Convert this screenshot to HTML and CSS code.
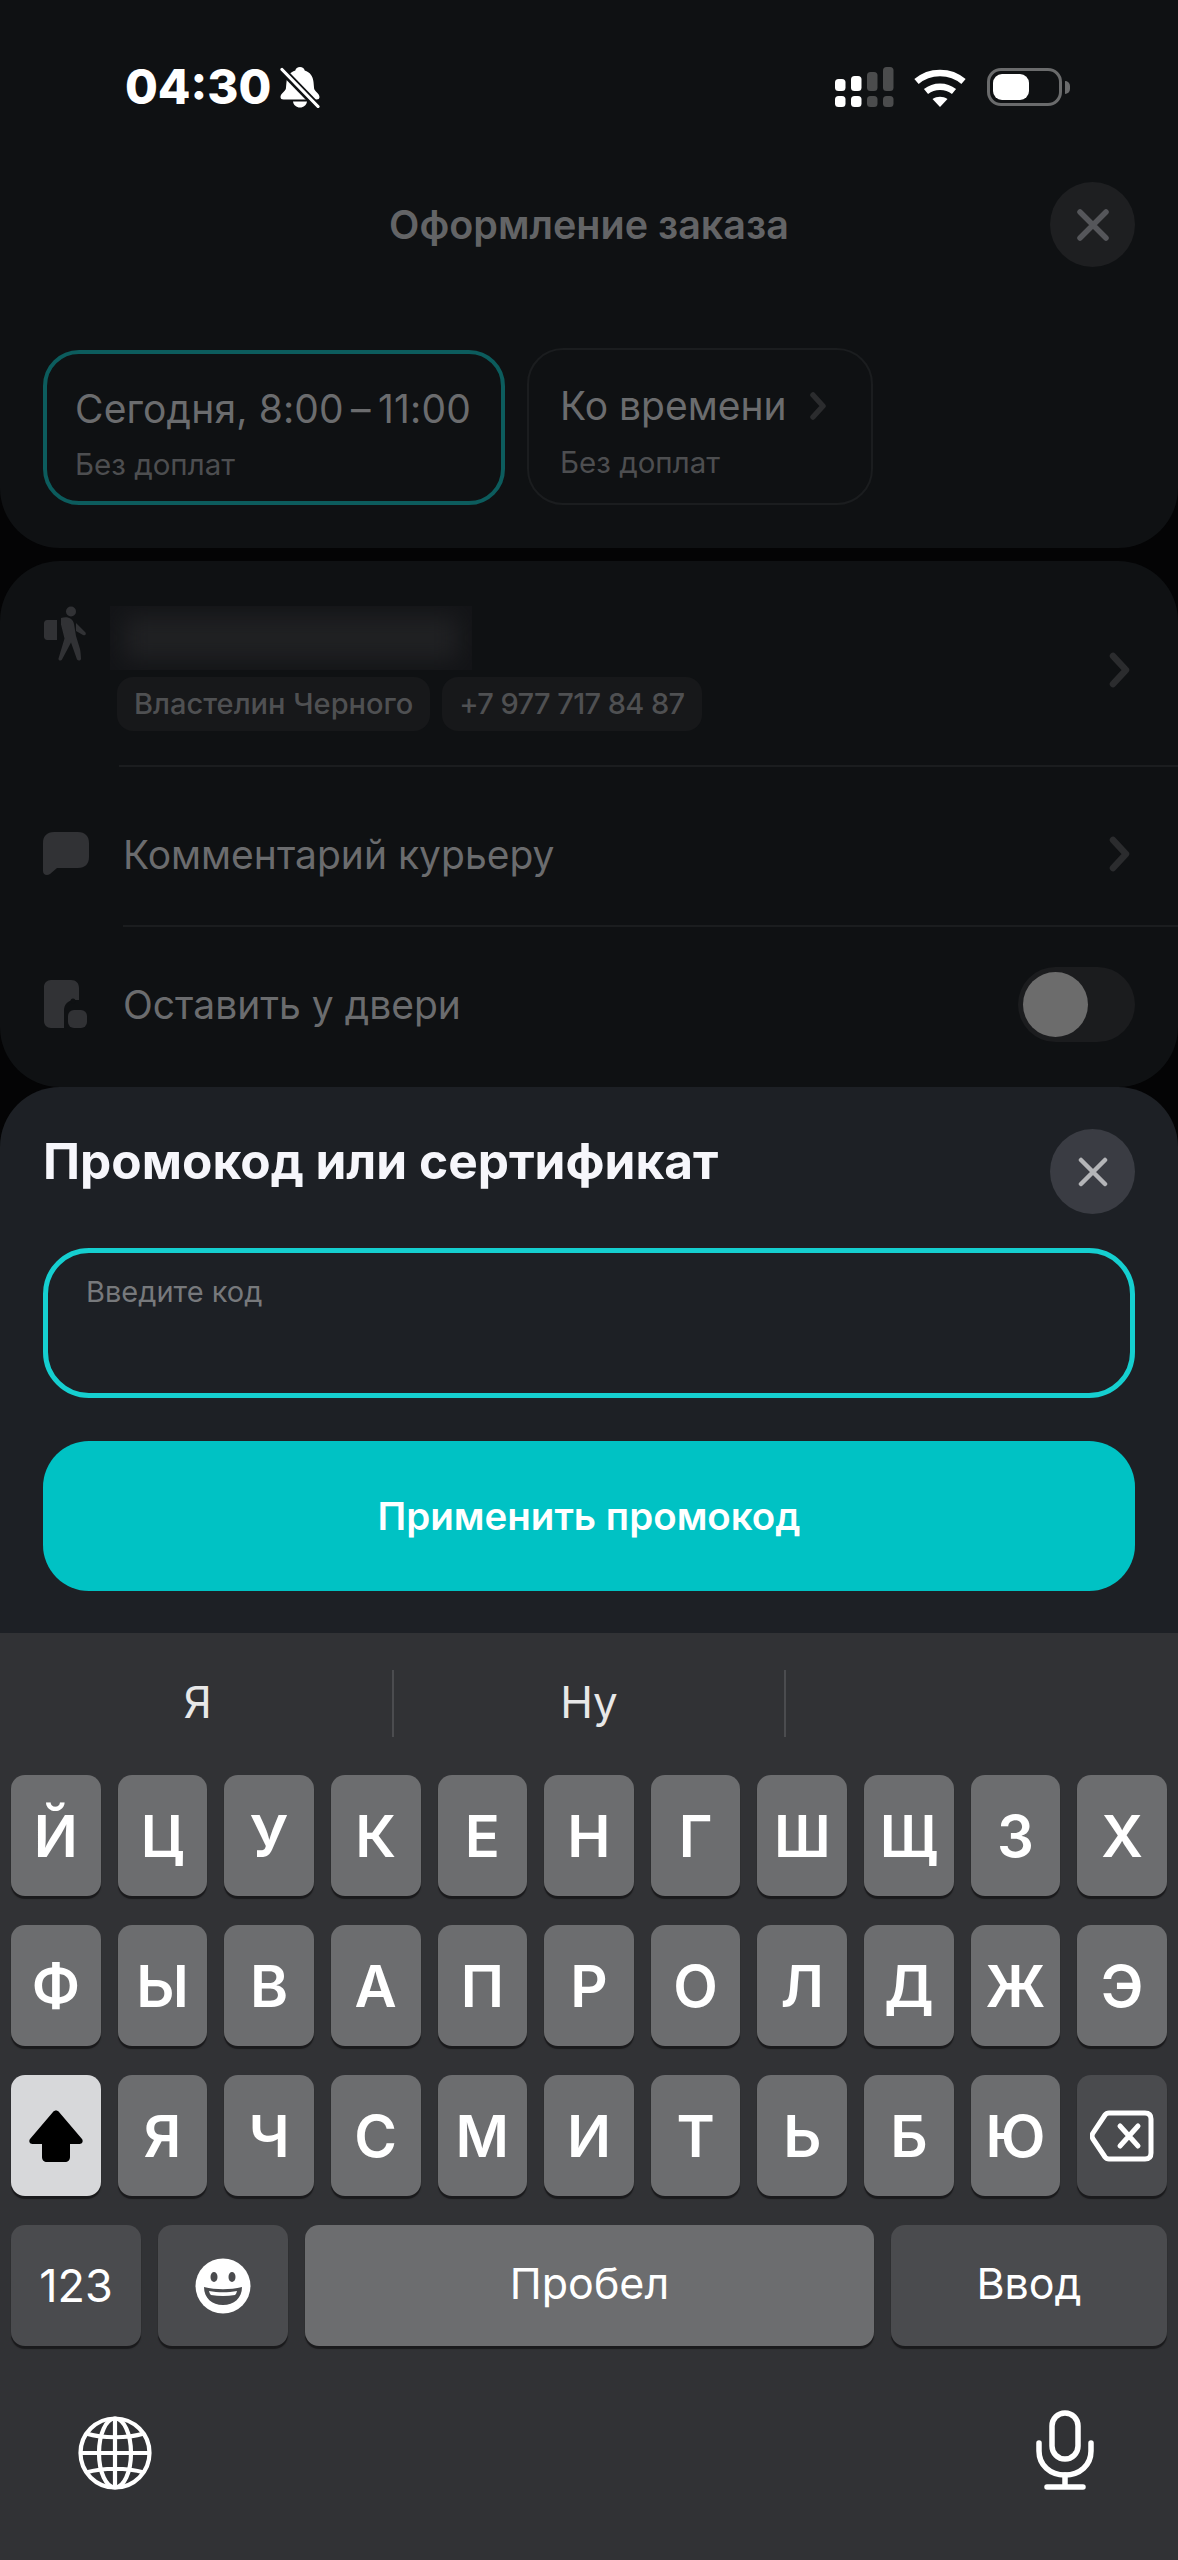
FILE: index.html
```html
<!DOCTYPE html>
<html lang="ru">
<head>
<meta charset="utf-8">
<title>Оформление заказа</title>
<meta name="viewport" content="width=device-width, initial-scale=1.0">
<link rel="stylesheet" href="styles.css">
</head>
<body>
<div class="screen">

	<div class="card-top">
		<div class="status">
			<div class="status-left">
				<span class="time">04:30</span>
				<svg class="bell" width="42" height="42" viewBox="0 0 42 42">
					<path fill="#fff" d="M21 1c2.500 0 4.300 1.500 4.700 3.500C31 6 34 10.500 34.500 16l.6 6.500c.4 3 5.400 4.600 5.400 8.500 0 1.700-1 2.500-3 2.500H4.500c-2 0-3-.8-3-2.500 0-3.900 5-5.500 5.400-8.500l.6-6.500C8 10.500 11 6 16.300 4.500 16.700 2.500 18.500 1 21 1z"/>
					<path fill="#fff" d="M14 35.500h14c-.5 3.500-3.300 6-7 6s-6.500-2.500-7-6z"/>
					<path stroke="#0f1113" stroke-width="7.500" d="M1 2l38 39"/>
					<path stroke="#fff" stroke-width="3.200" stroke-linecap="round" d="M3 3.500l36 37"/>
				</svg>
			</div>
			<div class="status-right">
				<svg width="60" height="42" viewBox="0 0 60 42">
					<g fill="#fff">
						<rect x="1" y="13" width="10.500" height="12" rx="3.500"/>
						<rect x="17" y="10" width="10.500" height="15" rx="3.500"/>
						<rect x="1" y="30" width="10.500" height="11" rx="3.500"/>
						<rect x="17" y="30" width="10.500" height="11" rx="3.500"/>
					</g>
					<g fill="#4b4c4d">
						<rect x="33" y="6" width="10.500" height="19" rx="3.500"/>
						<rect x="49" y="1" width="10.500" height="24" rx="3.500"/>
						<rect x="33" y="30" width="10.500" height="11" rx="3.500"/>
						<rect x="49" y="30" width="10.500" height="11" rx="3.500"/>
					</g>
				</svg>
				<svg class="wifi" width="54" height="42" viewBox="0 0 54 42">
					<g fill="none" stroke="#fff" stroke-width="6.500">
						<path d="M3.500 15.500c13-11.500 34-11.500 47 0"/>
						<path d="M13 25.500c8-6.500 20-6.500 28 0"/>
					</g>
					<path fill="#fff" d="M19.500 33c4.500-3 10.500-3 15 0l-7.500 8z"/>
				</svg>
				<div class="battery">
					<div class="battery-body"><div class="battery-level"></div></div>
					<div class="battery-cap"></div>
				</div>
			</div>
		</div>

		<div class="head">
			<div class="head-title">Оформление заказа</div>
			<div class="close close-dim">
				<svg width="36" height="36" viewBox="0 0 36 36"><path stroke="#55565a" stroke-width="5.500" stroke-linecap="round" d="M5 5l26 26M31 5L5 31"/></svg>
			</div>
		</div>

		<div class="tabs">
			<div class="tab tab-active">
				<div class="tab-main tab-date">Сегодня, 8:00&#8201;–&#8201;11:00</div>
				<div class="tab-sub">Без доплат</div>
			</div>
			<div class="tab tab-plain">
				<div class="tab-main">Ко времени
					<svg width="18" height="28" viewBox="0 0 18 28"><path fill="none" stroke="#2b2c2e" stroke-width="5.500" stroke-linecap="round" stroke-linejoin="round" d="M4 3l10 11L4 25"/></svg>
				</div>
				<div class="tab-sub">Без доплат</div>
			</div>
		</div>
	</div>

	<div class="card-info">
		<div class="row row-courier">
			<svg class="row-icon" width="44" height="56" viewBox="0 0 44 56">
				<g fill="#313235">
					<circle cx="27" cy="5.500" r="5"/>
					<path d="M3 14h10v20H3c-1.500 0-3-1.500-3-3V17c0-1.500 1.500-3 3-3z"/>
					<path d="M17 12c6-2 12 0 13 6l2 12 4 13c.5 2 1 7 1 10-.5 2-3 2-4 .5l-6-17-9 17c-1 2-4 1-3.500-1l6-20-3.500-14z"/>
					<path d="M32 17l9 9c2 2 0 4-2 3l-7-4z"/>
				</g>
			</svg>
			<div class="courier-body">
				<div class="blur-box"><div class="blur-fill"></div></div>
				<div class="chips">
					<span class="chip">Властелин Черного</span>
					<span class="chip chip-phone">+7 977 717 84 87</span>
				</div>
			</div>
			<svg class="chevron" width="26" height="36" viewBox="0 0 26 36"><path fill="none" stroke="#2b2c2e" stroke-width="6.500" stroke-linecap="round" stroke-linejoin="round" d="M6 4l13 14L6 32"/></svg>
		</div>

		<div class="row row-comment">
			<svg class="row-icon" width="46" height="44" viewBox="0 0 46 44">
				<path fill="#313235" d="M11 0h24c7 0 11 4 11 11v14c0 7-4 11-11 11H14l-7 6c-3 2-7 1-7-3V11C0 4 4 0 11 0z"/>
			</svg>
			<div class="row-text">Комментарий курьеру</div>
			<svg class="chevron" width="26" height="36" viewBox="0 0 26 36"><path fill="none" stroke="#2b2c2e" stroke-width="6.500" stroke-linecap="round" stroke-linejoin="round" d="M6 4l13 14L6 32"/></svg>
		</div>

		<div class="row row-door">
			<svg class="row-icon" width="44" height="48" viewBox="0 0 44 48">
				<path fill="#313235" d="M7 0h20c5 0 8 3 8 8v12h-4c-7 0-11 4-11 11v17H7c-4 0-7-3-7-7V7c0-4 3-7 7-7z"/>
				<circle cx="29" cy="21" r="2.500" fill="#0f1113"/>
				<rect x="24" y="30" width="19" height="18" rx="6" fill="#313235"/>
			</svg>
			<div class="row-text">Оставить у двери</div>
			<div class="toggle"><div class="knob"></div></div>
		</div>
	</div>

	<div class="sheet">
		<div class="sheet-head">
			<div class="sheet-title">Промокод или сертификат</div>
			<div class="close close-sheet">
				<svg width="30" height="30" viewBox="0 0 30 30"><path stroke="#b4b5b8" stroke-width="4.500" stroke-linecap="round" d="M3 3l24 24M27 3L3 27"/></svg>
			</div>
		</div>
		<div class="code-input">Введите код</div>
		<div class="apply">Применить промокод</div>
	</div>

	<div class="keyboard">
		<div class="suggest">
			<div class="suggest-item">Я</div>
			<div class="suggest-item">Ну</div>
			<div class="suggest-item"></div>
		</div>
		<div class="keys">
			<div class="key-row">
				<div class="key">Й</div><div class="key">Ц</div><div class="key">У</div><div class="key">К</div><div class="key">Е</div><div class="key">Н</div><div class="key">Г</div><div class="key">Ш</div><div class="key">Щ</div><div class="key">З</div><div class="key">Х</div>
			</div>
			<div class="key-row">
				<div class="key">Ф</div><div class="key">Ы</div><div class="key">В</div><div class="key">А</div><div class="key">П</div><div class="key">Р</div><div class="key">О</div><div class="key">Л</div><div class="key">Д</div><div class="key">Ж</div><div class="key">Э</div>
			</div>
			<div class="key-row">
				<div class="key key-shift">
					<svg width="60" height="52" viewBox="0 0 60 52"><path d="M27 2c1.500-2 4.500-2 6 0l23 27c1.500 2 .5 5-2.500 5H44v13c0 3-2 5-5 5H21c-3 0-5-2-5-5V34H6.500C3.500 34 2.500 31 4 29z"/></svg>
				</div>
				<div class="key">Я</div><div class="key">Ч</div><div class="key">С</div><div class="key">М</div><div class="key">И</div><div class="key">Т</div><div class="key">Ь</div><div class="key">Б</div><div class="key">Ю</div>
				<div class="key key-dark">
					<svg width="64" height="52" viewBox="0 0 64 52"><path fill="none" stroke="#fff" stroke-width="5" stroke-linejoin="round" d="M19 3h36c4 0 6 2 6 6v34c0 4-2 6-6 6H19c-2 0-3-.6-4-2L3 29c-1.300-2-1.300-4 0-6L15 5c1-1.400 2-2 4-2z"/><path stroke="#fff" stroke-width="5" stroke-linecap="round" d="M30 16l18 20M48 16L30 36"/></svg>
				</div>
			</div>
			<div class="key-row key-row-bottom">
				<div class="key key-dark key-small key-num">123</div>
				<div class="key key-dark key-emoji">
					<svg width="56" height="56" viewBox="0 0 56 56">
						<circle cx="28" cy="28" r="27.500" fill="#fff"/>
						<ellipse cx="19" cy="19" rx="3.500" ry="5" fill="#4a4b4e"/>
						<ellipse cx="37" cy="19" rx="3.500" ry="5" fill="#4a4b4e"/>
						<path fill="#4a4b4e" d="M9 29c12 3 26 3 38 0 0 11-8 18-19 18S9 40 9 29z"/>
						<path fill="#fff" d="M14 33c9 1.800 19 1.800 28 0-.5 2-1 3-2 4-8 1.200-16 1.200-24 0-1-1-1.500-2-2-4z"/>
					</svg>
				</div>
				<div class="key key-small key-space"><span>Пробел</span></div>
				<div class="key key-dark key-small key-enter"><span>Ввод</span></div>
			</div>
		</div>
		<div class="key-foot">
			<svg width="74" height="74" viewBox="0 0 74 74">
				<g fill="none" stroke="#fff" stroke-width="4.200">
					<circle cx="37" cy="37" r="34.500"/>
					<ellipse cx="37" cy="37" rx="16" ry="34.500"/>
					<path d="M37 2v70M2.500 37h69M8 17.500c17 5 41 5 58 0M8 56.500c17-5 41-5 58 0"/>
				</g>
			</svg>
			<svg width="58" height="80" viewBox="0 0 58 80">
				<g fill="none" stroke="#fff" stroke-width="5.500" stroke-linecap="round">
					<rect x="16" y="3" width="26" height="46" rx="13"/>
					<path d="M3 33v8c0 14 11 24 26 24s26-10 26-24v-8"/>
					<path d="M29 65v12M11 77h36"/>
				</g>
			</svg>
		</div>
	</div>

</div>
</body>
</html>
```

FILE: styles.css
```css
body { margin: 0; background: #040405; font-family: "Inter", "Noto Sans", sans-serif; }
svg { display: block; flex: none; }

.screen
{
	width: 1178px;
	height: 2560px;
	overflow: hidden;
	display: flex;
	flex-direction: column;
}

/* top card */
.card-top
{
	height: 548px;
	box-sizing: border-box;
	background: #0f1113;
	border-radius: 0 0 60px 60px;
	flex: none;
}
.status
{
	height: 182px;
	box-sizing: border-box;
	padding: 66px 108px 0 125px;
	display: flex;
	justify-content: space-between;
	align-items: flex-start;
}
.status-left { display: flex; align-items: center; gap: 8px; }
.time
{
	font-size: 47.500px;
	line-height: 42px;
	font-weight: 800;
	color: #fff;
}
.status-right { display: flex; align-items: center; gap: 19px; }
.wifi { margin-right: 1px; }
.battery { display: flex; align-items: center; gap: 3px; }
.battery-body
{
	width: 75px;
	height: 38px;
	box-sizing: border-box;
	border: 3px solid #6a6b6c;
	border-radius: 14px;
	padding: 3px;
}
.battery-level
{
	width: 36px;
	height: 100%;
	background: #fff;
	border-radius: 9px;
}
.battery-cap
{
	width: 5px;
	height: 13px;
	background: #6a6b6c;
	border-radius: 0 5px 5px 0;
}

.head
{
	height: 85px;
	padding: 0 43px;
	display: flex;
	align-items: center;
	justify-content: flex-end;
	position: relative;
}
.head-title
{
	position: absolute;
	left: 0;
	right: 0;
	text-align: center;
	font-size: 39.500px;
	font-weight: 600;
	color: #636466;
}
.close
{
	width: 85px;
	height: 85px;
	border-radius: 50%;
	display: flex;
	align-items: center;
	justify-content: center;
	flex: none;
}
.close-dim { background: #1e1f21; }
.close-sheet { background: #3a3c43; }

.tabs
{
	margin-top: 81px;
	padding: 0 43px;
	display: flex;
	gap: 22px;
	align-items: flex-end;
}
.tab
{
	box-sizing: border-box;
	display: flex;
	flex-direction: column;
}
.tab-active
{
	width: 462px;
	height: 155px;
	border: 4px solid #0c5c5d;
	border-radius: 36px;
	padding: 31px 0 0 28px;
}
.tab-plain
{
	width: 346px;
	height: 157px;
	border: 2px solid #1b1d1f;
	border-radius: 36px;
	padding: 32px 0 0 31px;
}
.tab-main
{
	font-size: 39px;
	line-height: 48px;
	color: #6b6c6e;
	white-space: nowrap;
	display: flex;
	align-items: center;
	gap: 22px;
}
.tab-date { letter-spacing: 0.15px; }
.tab-sub
{
	margin-top: 14px;
	font-size: 29.500px;
	line-height: 34px;
	color: #4d4e50;
}
.tab-plain .tab-sub { margin-top: 15px; }

/* courier, comment, door */
.card-info
{
	margin-top: 13px;
	height: 526px;
	flex: none;
	background: #0f1113;
	border-radius: 60px;
	overflow: hidden;
	display: flex;
	flex-direction: column;
}
.row
{
	display: flex;
	align-items: center;
	box-sizing: border-box;
	padding: 0 43px;
	position: relative;
}
.row-icon { width: 46px; }
.row-courier { height: 206px; align-items: flex-start; padding-top: 45px; }
.row-comment { height: 160px; padding-top: 14px; }
.row-door { height: 160px; padding-bottom: 6px; }
.row-courier::after, .row-comment::after
{
	content: "";
	position: absolute;
	right: 0;
	bottom: 0;
	height: 2px;
	background: #1b1d1f;
}
.row-courier::after { left: 119px; }
.row-comment::after { left: 123px; }
.row-text
{
	margin-left: 34px;
	flex: 1;
	font-size: 39px;
	color: #6b6c6e;
}
.courier-body { margin-left: 21px; flex: 1; }
.blur-box
{
	width: 362px;
	height: 64px;
	overflow: hidden;
	background: #131417;
}
.blur-fill
{
	margin: 10px 14px;
	height: 44px;
	background: #202123;
	filter: blur(12px);
}
.chips { margin: 7px 0 0 7px; display: flex; gap: 12px; }
.chip
{
	height: 54px;
	padding: 0 17px;
	box-sizing: border-box;
	background: #17181a;
	border-radius: 16px;
	font-size: 29px;
	font-weight: 500;
	line-height: 54px;
	color: #4f5052;
	white-space: nowrap;
}
.chip-phone { letter-spacing: -0.6px; }
.chevron { margin-right: 2px; }
.row-courier .chevron { margin-top: 46px; }
.toggle
{
	width: 117px;
	height: 75px;
	background: #1b1c1e;
	border-radius: 38px;
	padding: 5px;
	box-sizing: border-box;
}
.knob
{
	width: 65px;
	height: 65px;
	background: #6c6c6c;
	border-radius: 50%;
}

/* promo sheet */
.sheet
{
	height: 546px;
	flex: none;
	box-sizing: border-box;
	background: #1d2025;
	border-radius: 60px 60px 0 0;
	padding: 42px 43px;
}
.sheet-head
{
	height: 86px;
	display: flex;
	justify-content: space-between;
	align-items: flex-start;
}
.sheet-title
{
	margin-top: 2px;
	font-size: 49.600px;
	line-height: 60px;
	font-weight: 700;
	color: #f6f6fb;
}
.code-input
{
	margin-top: 33px;
	height: 150px;
	box-sizing: border-box;
	border: 5px solid #15cfd0;
	border-radius: 46px;
	padding: 21px 0 0 38px;
	font-size: 29px;
	line-height: 36px;
	color: #77797c;
}
.apply
{
	margin-top: 43px;
	height: 150px;
	background: #00c2c4;
	border-radius: 46px;
	font-size: 38.500px;
	font-weight: 600;
	line-height: 150px;
	text-align: center;
	color: #fff;
}

/* keyboard */
.keyboard
{
	flex: 1;
	background: #313235;
}
.suggest
{
	height: 142px;
	display: flex;
	align-items: center;
	padding: 0 3px;
	box-sizing: border-box;
}
.suggest-item
{
	flex: 1;
	height: 67px;
	margin-top: -2px;
	border-right: 2px solid #4b4c4f;
	font-size: 44px;
	line-height: 65px;
	text-align: center;
	color: #e8e8e8;
}
.suggest-item:last-child { border-right: 0; }
.keys
{
	padding: 0 11px;
	display: flex;
	flex-direction: column;
	gap: 29px;
}
.key-row
{
	display: grid;
	grid-template-columns: repeat(11, 1fr);
	gap: 17px;
	height: 121px;
}
.key-row-bottom { grid-template-columns: 130px 130px 1fr 276px; }
.key
{
	background: #6c6d6f;
	border-radius: 14px;
	box-shadow: 0 3px 1px #1a1a1c;
	display: flex;
	align-items: center;
	justify-content: center;
	font-size: 58px;
	font-weight: 600;
	color: #fff;
}
.key-small { font-size: 43px; font-weight: 400; }
.key-small span { margin-top: -5px; }
.key-num { font-size: 45px; }
.key-dark { background: #4a4b4e; }
.key-shift { background: #d7d8da; }
.key-foot
{
	padding: 64px 84px 0 78px;
	display: flex;
	justify-content: space-between;
	align-items: flex-end;
}
```
